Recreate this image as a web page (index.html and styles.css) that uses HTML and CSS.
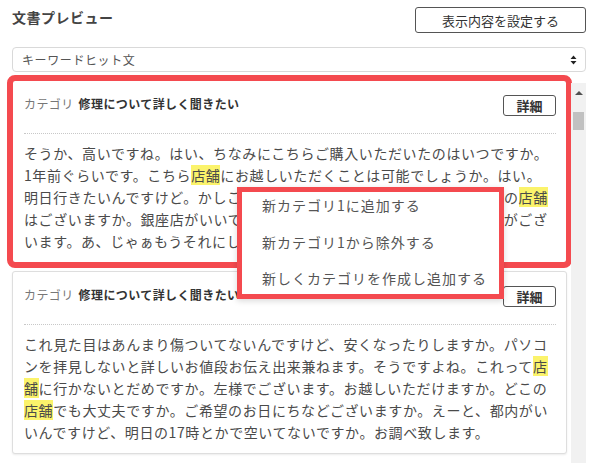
FILE: index.html
```html
<!DOCTYPE html>
<html lang="ja">
<head>
    <meta charset="UTF-8">
    <meta name="viewport" content="width=device-width, initial-scale=1.0">
    <title>文書プレビュー</title>
    <link rel="stylesheet" href="styles.css">
</head>
<body>
    <div class="page">
        <div class="top">
            <h1 class="title">文書プレビュー</h1>
            <button class="btn btnSettings">表示内容を設定する</button>
        </div>
        <div class="selectBox">
            <span>キーワードヒット文</span>
            <svg width="7" height="10" viewBox="0 0 7 10">
                <path d="M0.5 4 L3.5 0.5 L6.5 4 Z M0.5 6 L3.5 9.5 L6.5 6 Z" fill="#222"/>
            </svg>
        </div>
        <div class="list">
            <div class="cards">
                <div class="card marked">
                    <div class="cardHead">
                        <div class="cardTitle"><span class="label">カテゴリ</span>修理について詳しく聞きたい</div>
                        <button class="btn btnDetail">詳細</button>
                    </div>
                    <p class="cardText">そうか、高いですね。はい、ちなみにこちらご購入いただいたのはいつですか。1年前ぐらいです。こちら<mark>店舗</mark>にお越しいただくことは可能でしょうか。はい。明日行きたいんですけど。かしこまりました。それでは、お客様のご希望の<mark>店舗</mark>はございますか。銀座店がいいです。かしこまりました。明日ですと空きがございます。あ、じゃぁもうそれにします。</p>
                </div>
                <div class="card">
                    <div class="cardHead">
                        <div class="cardTitle"><span class="label">カテゴリ</span>修理について詳しく聞きたい</div>
                        <button class="btn btnDetail">詳細</button>
                    </div>
                    <p class="cardText">これ見た目はあんまり傷ついてないんですけど、安くなったりしますか。パソコンを拝見しないと詳しいお値段お伝え出来兼ねます。そうですよね。これって<mark>店舗</mark>に行かないとだめですか。左様でございます。お越しいただけますか。どこの<mark>店舗</mark>でも大丈夫ですか。ご希望のお日にちなどございますか。えーと、都内がいいんですけど、明日の17時とかで空いてないですか。お調べ致します。</p>
                </div>
            </div>
            <div class="scrollbar">
                <span class="arrowUp"></span>
                <span class="thumb"></span>
            </div>
        </div>
        <ul class="contextMenu">
            <li>新カテゴリ1に追加する</li>
            <li>新カテゴリ1から除外する</li>
            <li>新しくカテゴリを作成し追加する</li>
        </ul>
    </div>
</body>
</html>
```

FILE: styles.css
```css
html,body {
    margin: 0;
    background: #fff;
}
body {
    font-family: "Noto Sans CJK JP", "Noto Sans", sans-serif;
    color: #444;
}
.page {
    position: relative;
    height: 463px;
    box-sizing: border-box;
    padding: 7px 4px 0 12px;
    overflow: hidden;
}
.top {
    display: flex;
    justify-content: space-between;
    align-items: flex-start;
    height: 26px;
}
.title {
    margin: 0;
    font-size: 14px;
    line-height: 20px;
    letter-spacing: 0.5px;
    font-weight: bold;
    color: #444;
}
.btn {
    font-family: inherit;
    background: #fff;
    border: 1px solid #555;
    border-radius: 3px;
    color: #333;
    padding: 0;
    cursor: pointer;
}
.btnSettings {
    height: 26px;
    width: 171px;
    font-size: 13px;
}
.selectBox {
    margin-top: 14px;
    height: 25px;
    box-sizing: border-box;
    border: 1px solid #d9d9d9;
    border-radius: 4px;
    display: flex;
    align-items: center;
    justify-content: space-between;
    padding: 0 8px 0 9px;
    font-size: 12px;
    letter-spacing: 0.6px;
    color: #555;
}
.list {
    display: flex;
    gap: 4px;
    margin-top: 3px;
    height: 388px;
}
.cards {
    width: 555px;
    padding-top: 5px;
    display: flex;
    flex-direction: column;
    gap: 8px;
}
.card {
    background: #fff;
    border: 1px solid #dedede;
    border-radius: 3px;
    box-shadow: 0 1px 2px rgba(0,0,0,0.08);
    padding: 0 10px 10px 11px;
}
.card.marked {
    outline: 6px solid #f44a4f;
    outline-offset: -1px;
}
.cardHead {
    display: flex;
    justify-content: space-between;
    align-items: center;
    padding-top: 14px;
    padding-bottom: 17px;
    border-bottom: 1px dotted #c8c8c8;
}
.cardTitle {
    font-size: 12px;
    line-height: 16px;
    font-weight: bold;
    letter-spacing: 0.4px;
    color: #333;
    padding-bottom: 4px;
}
.label {
    font-weight: normal;
    color: #777;
    margin-right: 5px;
}
.btnDetail {
    width: 53px;
    height: 21px;
    font-size: 13px;
    font-weight: bold;
}
.cardText {
    margin: 8px 0 0;
    padding-right: 4px;
    font-size: 14px;
    line-height: 22px;
    letter-spacing: 0.6px;
    color: #4a4a4a;
}
mark {
    background: #fbf36b;
    color: inherit;
}
.scrollbar {
    width: 15px;
    margin-top: 8px;
    background: #f1f1f1;
    display: flex;
    flex-direction: column;
    align-items: center;
}
.arrowUp {
    margin-top: 8px;
    width: 0;
    height: 0;
    border-left: 4px solid transparent;
    border-right: 4px solid transparent;
    border-bottom: 4px solid #505050;
}
.thumb {
    margin-top: 17px;
    width: 11px;
    height: 18px;
    background: #c1c1c1;
}
.contextMenu {
    position: absolute;
    left: 237px;
    top: 187px;
    width: 267px;
    height: 112px;
    box-sizing: border-box;
    margin: 0;
    padding: 0 0 0 25px;
    list-style: none;
    background: #fff;
    box-shadow: 0 2px 6px rgba(0,0,0,0.15);
}
.contextMenu::after {
    content: "";
    position: absolute;
    inset: 0;
    border: 5px solid #f44a4f;
    pointer-events: none;
}
.contextMenu li {
    height: 36.5px;
    line-height: 36.5px;
    font-size: 14px;
    letter-spacing: 1px;
    color: #555;
    white-space: nowrap;
}
```
